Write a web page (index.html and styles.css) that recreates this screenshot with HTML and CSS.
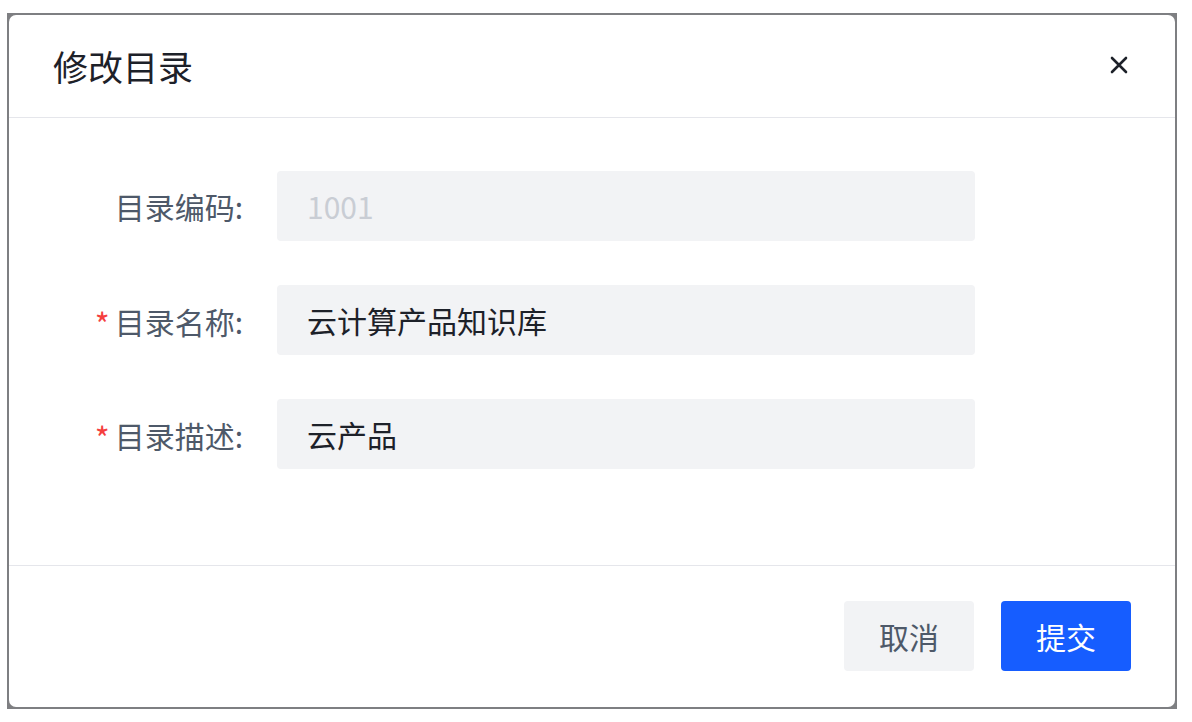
FILE: index.html
```html
<!DOCTYPE html>
<html lang="zh-CN">
<head>
<meta charset="utf-8">
<title>修改目录</title>
<link rel="stylesheet" href="styles.css">
</head>
<body>
<div class="frame">
  <div class="dialog">
    <div class="dialog-header">
      <div class="dialog-title">修改目录</div>
      <button class="close-btn" aria-label="关闭">
        <svg width="18" height="18" viewBox="0 0 18 18"><path d="M2 2 L16 16 M16 2 L2 16" stroke="#1d2129" stroke-width="2.6" stroke-linecap="round" fill="none"/></svg>
      </button>
    </div>
    <div class="dialog-body">
      <div class="form-row">
        <label class="form-label">目录编码:</label>
        <div class="form-input disabled">1001</div>
      </div>
      <div class="form-row">
        <label class="form-label"><span class="req">*</span>目录名称:</label>
        <div class="form-input">云计算产品知识库</div>
      </div>
      <div class="form-row">
        <label class="form-label"><span class="req">*</span>目录描述:</label>
        <div class="form-input">云产品</div>
      </div>
    </div>
    <div class="dialog-footer">
      <button class="btn btn-secondary">取消</button>
      <button class="btn btn-primary">提交</button>
    </div>
  </div>
</div>
</body>
</html>
```

FILE: styles.css
```css
html, body {
  margin: 0;
  padding: 0;
  background: #ffffff;
}
body {
  font-family: "Noto Sans CJK SC", "Microsoft YaHei", "Noto Sans", sans-serif;
  color: #1d2129;
}
.frame {
  margin: 13px 0 0 7px;
  width: 1170px;
  height: 696px;
  box-sizing: border-box;
  padding: 2px;
  background: #7e7f82;
}
.dialog {
  background: #ffffff;
  border-radius: 7px;
  height: 100%;
  display: flex;
  flex-direction: column;
}
.dialog-header {
  height: 103px;
  flex: none;
  box-sizing: border-box;
  border-bottom: 1px solid #e5e6eb;
  display: flex;
  align-items: center;
  justify-content: space-between;
  padding: 0 47px 2px 44px;
}
.dialog-title {
  font-size: 35px;
  line-height: 1;
  color: #1d2129;
}
.close-btn {
  border: 0;
  background: transparent;
  padding: 0;
  width: 18px;
  height: 18px;
  display: flex;
  cursor: pointer;
}
.dialog-body {
  padding: 53px 44px 96px 44px;
  border-bottom: 1px solid #e5e6eb;
  display: flex;
  flex-direction: column;
  gap: 44px;
}
.form-row {
  display: flex;
  align-items: center;
  gap: 34px;
}
.form-label {
  width: 190px;
  text-align: right;
  font-size: 30px;
  color: #4e5969;
  white-space: nowrap;
}
.req {
  color: #f53f3f;
  font-size: 32px;
  margin-right: 5px;
  position: relative;
  top: 3px;
}
.form-input {
  width: 698px;
  height: 70px;
  box-sizing: border-box;
  background: #f2f3f5;
  border-radius: 4px;
  padding: 0 30px;
  display: flex;
  align-items: center;
  font-size: 30px;
  color: #1d2129;
}
.form-input.disabled {
  color: #c9cdd4;
}
.dialog-footer {
  padding: 35px 44px 35px 0;
  display: flex;
  justify-content: flex-end;
  gap: 27px;
}
.btn {
  width: 130px;
  height: 70px;
  border: 0;
  border-radius: 4px;
  font-family: inherit;
  font-size: 30px;
  cursor: pointer;
  padding: 0;
}
.btn-secondary {
  background: #f2f3f5;
  color: #4e5969;
}
.btn-primary {
  background: #165dff;
  color: #ffffff;
}
```
